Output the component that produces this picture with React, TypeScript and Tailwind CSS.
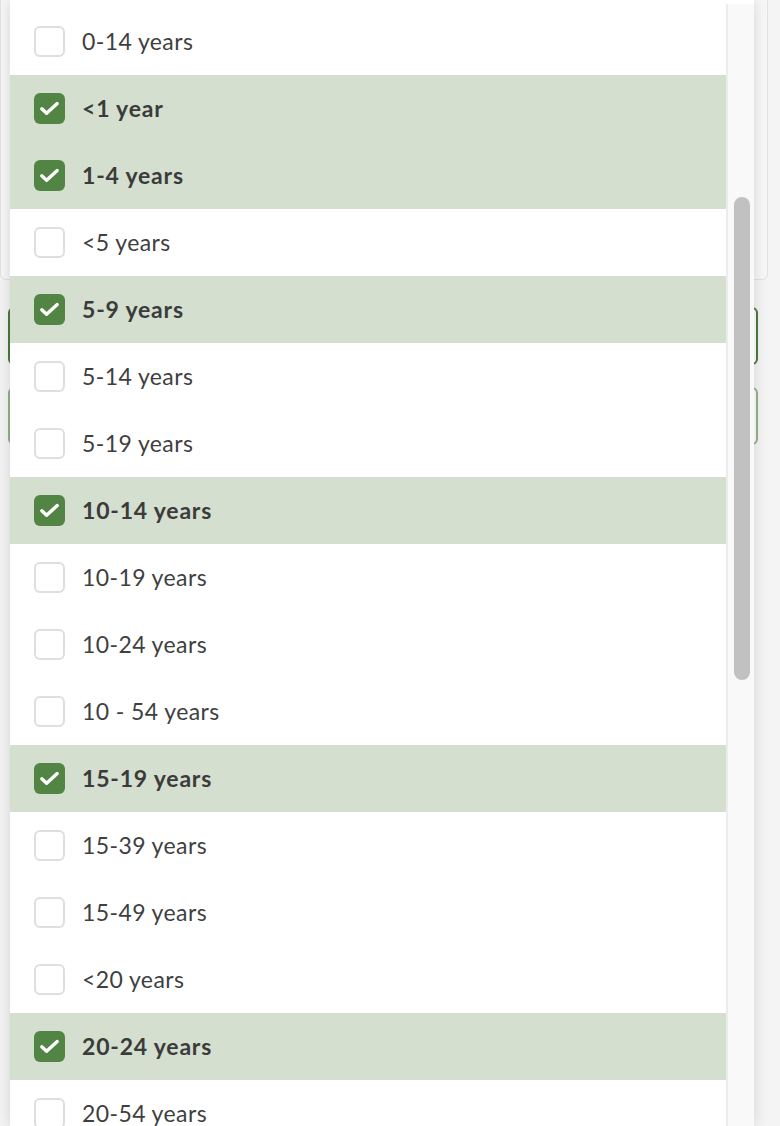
type Option = { label: string; checked: boolean };

const options: Option[] = [
  { label: '0-14 years', checked: false },
  { label: '<1 year', checked: true },
  { label: '1-4 years', checked: true },
  { label: '<5 years', checked: false },
  { label: '5-9 years', checked: true },
  { label: '5-14 years', checked: false },
  { label: '5-19 years', checked: false },
  { label: '10-14 years', checked: true },
  { label: '10-19 years', checked: false },
  { label: '10-24 years', checked: false },
  { label: '10 - 54 years', checked: false },
  { label: '15-19 years', checked: true },
  { label: '15-39 years', checked: false },
  { label: '15-49 years', checked: false },
  { label: '<20 years', checked: false },
  { label: '20-24 years', checked: true },
  { label: '20-54 years', checked: false },
];

function OptionRow({ label, checked }: Option) {
  return (
    <div
      className={`flex h-[67px] shrink-0 items-center gap-[17px] pl-6 ${
        checked ? 'bg-[#d4dfcf]' : 'bg-white'
      }`}
    >
      {checked ? (
        <span className="flex h-[31px] w-[31px] items-center justify-center rounded-[6px] bg-[#528543]">
          <svg width="21" height="15" viewBox="0 0 21 15" fill="none">
            <path
              d="M2.8 7.8 L7.6 12.2 L18.2 2.6"
              stroke="white"
              strokeWidth="3.4"
              strokeLinecap="round"
              strokeLinejoin="round"
            />
          </svg>
        </span>
      ) : (
        <span className="h-[31px] w-[31px] rounded-[6px] border-2 border-[#dedede] bg-white" />
      )}
      <span
        className={`text-[23px] ${
          checked
            ? 'font-bold tracking-[0.8px] text-[#3b3b3b]'
            : 'tracking-[0.4px] text-[#3f3f3f]'
        }`}
      >
        {label}
      </span>
    </div>
  );
}

export default function App() {
  return (
    <div className="relative h-[1126px] w-[780px] overflow-hidden bg-[#f4f4f4] font-['Lato',sans-serif]">
      {/* page content behind the dropdown */}
      <div className="flex flex-col">
        <div className="-mt-4 mr-3 h-[296px] rounded-b-[6px] border border-[#e2e2e2] bg-[#f7f7f7]" />
        <div className="ml-2 mr-[22px] mt-[27px] flex flex-col gap-[22px]">
          <div className="h-[58px] rounded-[6px] border-2 border-[#4b7a3d] bg-white" />
          <div className="h-[58px] rounded-[6px] border-2 border-[#93b389] bg-white" />
        </div>
      </div>

      {/* dropdown panel */}
      <div className="absolute left-[10px] top-0 flex h-full w-[744px] bg-white shadow-[0_0_14px_rgba(0,0,0,0.14)]">
        <div className="flex flex-1 flex-col overflow-hidden pt-2">
          {options.map((o) => (
            <OptionRow key={o.label} {...o} />
          ))}
        </div>
        <div className="relative mt-1 w-[28px] border-l-2 border-[#ececec] bg-[#f9f9f9]">
          <div className="absolute left-[6px] top-[193px] h-[483px] w-4 rounded-full bg-[#c1c1c1]" />
        </div>
      </div>
    </div>
  );
}
